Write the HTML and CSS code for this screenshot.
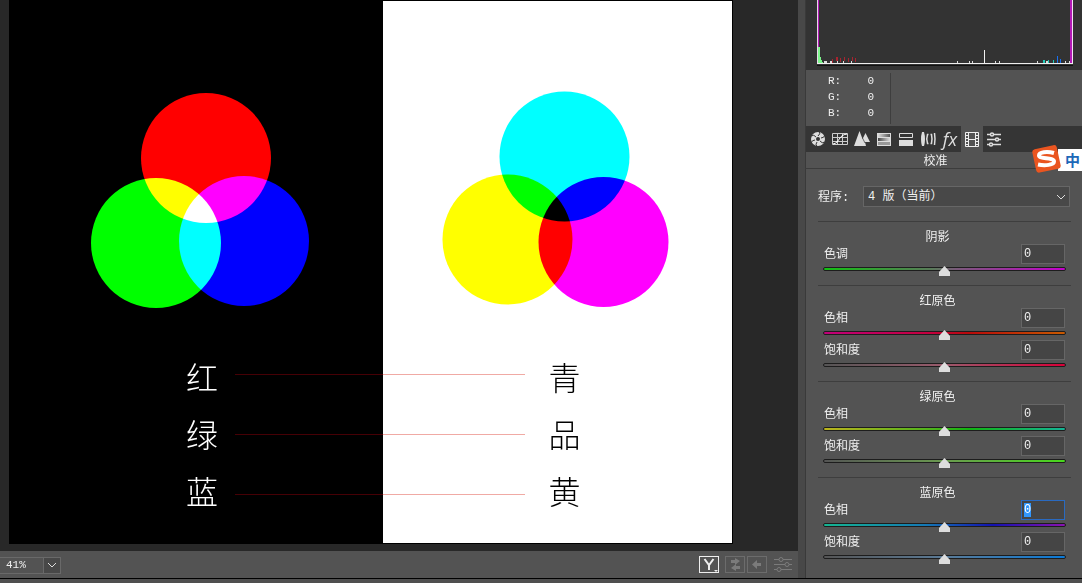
FILE: index.html
```
<!DOCTYPE html>
<html lang="zh-CN">
<head>
<meta charset="utf-8">
<title>Camera Raw</title>
<link rel="stylesheet" href="styles.css">
</head>
<body>
<div class="app">
  <main class="viewer">
    <div class="stage">
      <div class="document">
        <section class="half dark">
          <svg class="circles" viewBox="0 0 374 348" role="img" aria-label="RGB">
            <g class="screen">
              <circle cx="197" cy="158" r="65" fill="#f00"/>
              <circle cx="147" cy="243" r="65" fill="#0f0"/>
              <circle cx="235" cy="241" r="65" fill="#00f"/>
            </g>
          </svg>
          <ul class="words"><li>红</li><li>绿</li><li>蓝</li></ul>
        </section>
        <section class="half light">
          <svg class="circles" viewBox="0 0 349 348" role="img" aria-label="CMY">
            <g class="multiply">
              <circle cx="181.500" cy="156.500" r="65" fill="#0ff"/>
              <circle cx="124.500" cy="239.500" r="65" fill="#ff0"/>
              <circle cx="220.500" cy="242" r="65" fill="#f0f"/>
            </g>
          </svg>
          <ul class="words"><li>青</li><li>品</li><li>黄</li></ul>
        </section>
        <div class="links"><i></i><i></i><i></i></div>
      </div>
    </div>
    <footer class="status">
      <div class="zoom">
        <input class="zoom-value" type="text" value="41%" aria-label="缩放">
        <button class="zoom-menu" aria-label="缩放级别"><svg width="10" height="6" viewBox="0 0 10 6"><path d="M1 1l4 4 4-4"/></svg></button>
      </div>
      <div class="views">
        <button class="view on" aria-label="对比视图"><svg width="20" height="17" viewBox="0 0 20 17"><path d="M5.500 3l4.500 6 4.500-6M10 8.500V14" fill="none" stroke="#eee" stroke-width="2"/><path d="M15 14h4l-2 2z" fill="#eee"/></svg></button>
        <button class="view" aria-label="交换"><svg width="20" height="17" viewBox="0 0 20 17"><path d="M6 4h4V2l5 3-5 4V7H6zM15 10h-4V8l-5 4 5 3v-2h4z" fill="#7b7b7b"/></svg></button>
        <button class="view" aria-label="复制"><svg width="20" height="17" viewBox="0 0 20 17"><path d="M5 8.500l5-4.500v3h4v3h-4v3z" fill="#7b7b7b"/></svg></button>
        <button class="view plain" aria-label="设置"><svg width="18" height="16" viewBox="0 0 18 16"><path d="M0 2.500h5M9 2.500h9M0 7.500h11M15 7.500h3M0 12.500h3M7 12.500h11" stroke="#7b7b7b"/><g fill="none" stroke="#7b7b7b"><circle cx="7" cy="2.500" r="2"/><circle cx="13" cy="7.500" r="2"/><circle cx="5" cy="12.500" r="2"/></g></svg></button>
      </div>
    </footer>
  </main>

  <aside class="panel">
    <div class="histogram">
      <svg width="256" height="66" viewBox="0 0 256 66" role="img" aria-label="直方图" shape-rendering="crispEdges">
        <path d="M1 0h1v63h-1zM253 0h2v63h-2z" fill="#b319b6"/>
        <path d="M0 0h1v63h-1z" fill="#e9d9ea"/><path d="M255 0h1v63h-1z" fill="#f3e3f5"/>
        <path d="M1 47h2v9l3 7H1z" fill="#7ef58d"/>
        <path d="M15 61h1M19 59h2M23 60h1M27 59h1M31 60h1M35 59h1M38 60h1" stroke="#a8242f" stroke-width="4"/>
        <path d="M7 62h3M13 62h2M20 62h1M26 62h1M34 62h1M140 62h1M152 62h1M155 62h1M178 62h1M182 62h1M220 62h1M229 62h2M243 62h1M248 62h1M252 62h1" stroke="#ddd" stroke-width="2"/>
        <path d="M226 61h2M231 61h1M236 61h1" stroke="#22cdbc" stroke-width="3"/>
        <path d="M240 56h1v7h-1zM243 59h1v4h-1z" fill="#1971f2"/>
        <path d="M167 50h1v13h-1z" fill="#f2f2f2"/>
        <path d="M0 63h256v1H0z" fill="#eee"/><path d="M0 65h256v1H0z" fill="#111"/>
      </svg>
    </div>
    <dl class="readout">
      <div><dt>R:</dt><dd>0</dd></div>
      <div><dt>G:</dt><dd>0</dd></div>
      <div><dt>B:</dt><dd>0</dd></div>
    </dl>
    <nav class="tabs">
      <button class="tab" aria-label="基本"><svg width="18" height="18" viewBox="0 0 18 18"><circle cx="9" cy="9" r="7" fill="#ddd"/><path d="M9 6Q12 4 10 1M12 8Q15 8 16 5M11 11Q13 14 16 12M8 12Q6 14 8 17M6 10Q3 10 2 13M7 7Q5 4 2 6" fill="none" stroke="#353535"/><circle cx="9" cy="9" r="2" fill="#353535"/></svg></button>
      <button class="tab" aria-label="色调曲线"><svg width="18" height="18" viewBox="0 0 18 18"><path d="M1.500 3.500h15v11h-15zM1 7.500h16M1 11.500h16M6.500 3v12M11.500 3v12" fill="none" stroke="#ccc"/><path d="M2 14C9 13 7 5 16 4" fill="none" stroke="#fff"/></svg></button>
      <button class="tab" aria-label="细节"><svg width="18" height="18" viewBox="0 0 18 18"><path d="M1 16L6.500 1l3 8L12.500 3l4.500 9h-5l1 4z" fill="#ddd"/><path d="M9.500 8l2.500 5" stroke="#353535" stroke-width=".7"/></svg></button>
      <button class="tab" aria-label="HSL"><svg width="18" height="18" viewBox="0 0 18 18"><defs><linearGradient id="h"><stop stop-color="#444"/><stop offset="1" stop-color="#ddd"/></linearGradient><linearGradient id="k"><stop stop-color="#ddd"/><stop offset="1" stop-color="#555"/></linearGradient></defs><path d="M2 3h14v13H2z" fill="#ddd"/><path d="M3 4h12v3H3z" fill="url(#k)"/><path d="M3 8h12v3H3z" fill="url(#h)"/><path d="M3 12h12v3H3z" fill="#999"/></svg></button>
      <button class="tab" aria-label="分离色调"><svg width="18" height="18" viewBox="0 0 18 18"><path d="M2.500 3.500h13v4h-13z" fill="none" stroke="#ddd"/><path d="M2 10h14v6H2z" fill="#ddd"/></svg></button>
      <button class="tab" aria-label="镜头校正"><svg width="18" height="18" viewBox="0 0 18 18"><path d="M3 2h2q2 7 0 14H3Q1 9 3 2z" fill="#ddd"/><path d="M9.500 4.500h-1q-1.500 4.500 0 9h1M11.500 4.500h1q1 4.500 0 9h-1M15.500 3q1 6 0 12" fill="none" stroke="#ddd" stroke-width="1.500"/></svg></button>
      <button class="tab fx" aria-label="效果">fx</button>
      <button class="tab on" aria-label="校准"><svg width="18" height="18" viewBox="0 0 18 18"><path d="M2.500 2.500h13v14h-13zM5.500 2v15M12.500 2v15M5 9.500h8" fill="none" stroke="#eee"/><path d="M3 5.500h2M3 8.500h2M3 11.500h2M3 14.500h2M13 5.500h2M13 8.500h2M13 11.500h2M13 14.500h2" stroke="#eee"/></svg></button>
      <button class="tab" aria-label="预设"><svg width="18" height="18" viewBox="0 0 18 18"><path d="M2 4.500h14M2 9.500h14M2 14.500h14" stroke="#ddd" stroke-width="1.500"/><g fill="#353535" stroke="#ddd" stroke-width="1.500"><circle cx="7" cy="4.500" r="1.500"/><circle cx="12" cy="9.500" r="1.500"/><circle cx="6" cy="14.500" r="1.500"/></g></svg></button>
    </nav>
    <h1 class="title">校准</h1>
    <div class="ime">
      <svg width="30" height="28" viewBox="0 0 30 28"><rect x="2" y="2" width="25" height="24" rx="3" fill="#ea5520" transform="rotate(-12 14 14)"/><path d="M22 8C15 6 7 7 7 10.500c0 4 15 1.500 15 6 0 3.500-9 4.500-16 3" fill="none" stroke="#fff" stroke-width="4"/></svg>
      <span>中</span>
    </div>
    <div class="process">
      <label for="process">程序:</label>
      <div class="picker">
        <select id="process"><option>4 版（当前）</option></select>
        <svg width="10" height="6" viewBox="0 0 10 6"><path d="M1 1l4 4 4-4"/></svg>
      </div>
    </div>
    <div class="groups">
      <fieldset class="group">
        <legend>阴影</legend>
        <div class="control"><label for="a1">色调</label><input class="num" id="a1" type="text" value="0"><input class="slider tint" type="range" min="-100" max="100" value="0" aria-label="色调"></div>
      </fieldset>
      <fieldset class="group">
        <legend>红原色</legend>
        <div class="control"><label for="b1">色相</label><input class="num" id="b1" type="text" value="0"><input class="slider red-hue" type="range" min="-100" max="100" value="0" aria-label="红色色相"></div>
        <div class="control"><label for="b2">饱和度</label><input class="num" id="b2" type="text" value="0"><input class="slider red-sat" type="range" min="-100" max="100" value="0" aria-label="红色饱和度"></div>
      </fieldset>
      <fieldset class="group">
        <legend>绿原色</legend>
        <div class="control"><label for="c1">色相</label><input class="num" id="c1" type="text" value="0"><input class="slider green-hue" type="range" min="-100" max="100" value="0" aria-label="绿色色相"></div>
        <div class="control"><label for="c2">饱和度</label><input class="num" id="c2" type="text" value="0"><input class="slider green-sat" type="range" min="-100" max="100" value="0" aria-label="绿色饱和度"></div>
      </fieldset>
      <fieldset class="group">
        <legend>蓝原色</legend>
        <div class="control"><label for="d1">色相</label><input class="num active" id="d1" type="text" value="0"><input class="slider blue-hue" type="range" min="-100" max="100" value="0" aria-label="蓝色色相"></div>
        <div class="control"><label for="d2">饱和度</label><input class="num" id="d2" type="text" value="0"><input class="slider blue-sat" type="range" min="-100" max="100" value="0" aria-label="蓝色饱和度"></div>
      </fieldset>
    </div>
  </aside>
</div>
<script src="main.js"></script>
</body>
</html>
```
FILE: main.js
```
document.getElementById("d1").select();
```
FILE: styles.css
```
* { box-sizing: border-box; }
body {
  margin: 0;
  background: #4f4f4f;
  color: #f0f0f0;
  font: 12px/16px "Liberation Mono", "Noto Sans CJK SC", monospace;
}
button, input, select { font: inherit; color: inherit; margin: 0; }
button { padding: 0; border: 0; background: none; display: grid; place-items: center; }
svg { display: block; }

.app {
  display: flex;
  height: calc(100vh - 4px);
  border-bottom: 1px solid #000;
  overflow: hidden;
}
.viewer { flex: 1; min-width: 0; display: flex; flex-direction: column; }
.stage { flex: 1; min-height: 0; padding: 0 65px 7px 9px; background: #282828; }
.document {
  position: relative;
  display: grid;
  grid-template-columns: 374fr 349fr;
  height: 100%;
  border: 1px solid #000;
  border-width: 1px 1px 1px 0;
  background: #000;
}
.half { display: flex; flex-direction: column; min-width: 0; }
.dark { background: #000; color: #fff; }
.light { background: #fff; color: #000; }
.circles { width: 100%; height: auto; margin-top: -1px; }
.screen, .multiply { isolation: isolate; }
.screen circle { mix-blend-mode: screen; }
.multiply circle { mix-blend-mode: multiply; }
.words {
  list-style: none;
  margin: 0;
  padding: 0 0 0 12px;
  text-align: center;
  font: 300 32px/57px "Noto Sans CJK SC", sans-serif;
}
.light .words { padding-left: 14px; }
.links {
  position: absolute;
  left: 226px;
  right: 207px;
  top: 373px;
  display: flex;
  flex-direction: column;
  gap: 59px;
}
.links i { height: 1px; background: linear-gradient(90deg, #460005 51%, #f0aaa4 51%); }

.status {
  display: flex;
  justify-content: space-between;
  align-items: center;
  height: 27px;
  padding-right: 5px;
  background: #535353;
}
.zoom { display: flex; height: 17px; margin-top: 1px; border: 1px solid #696969; border-left: 0; }
.zoom-value {
  width: 43px;
  padding: 0 0 0 6px;
  border: 0;
  background: transparent;
  font-size: 11px;
}
.zoom-menu { width: 17px; border-left: 1px solid #696969; background: #484848; }
.zoom-menu path, .picker path { fill: none; stroke: #ddd; }
.views { display: flex; align-items: center; gap: 2px; }
.view { width: 20px; height: 17px; outline: 1px solid #6c6c6c; outline-offset: -1px; }
.view.on { outline-color: #eee; margin-right: 4px; }
.view.plain { outline: 0; margin-left: 4px; }

.panel {
  position: relative;
  flex: 0 0 284px;
  display: flex;
  flex-direction: column;
  border-left: 7px solid #484848;
  box-shadow: inset 1px 0 #3a3a3a;
  background: #535353;
}
.histogram { height: 70px; margin-left: 1px; padding: 0 9px 0 11px; background: #333; }
.readout {
  display: flex;
  flex-direction: column;
  width: 86px;
  height: 51px;
  margin: 3px 0 2px 0;
  padding: 0 16px 0 23px;
  border-right: 1px solid #3e3e3e;
  font-size: 11px;
  line-height: 16px;
}
.readout div { display: flex; justify-content: space-between; }
.readout dd { margin: 0; }
.tabs { display: flex; height: 26px; margin-left: 1px; padding-left: 1px; background: #353535; }
.tab { width: 22px; height: 26px; }
.tab.on { background: #535353; }
.tab.fx { font: italic 18px/22px "Open Sans", sans-serif; color: #ddd; }
.title {
  height: 17px;
  margin: 0;
  padding-right: 16px;
  border-bottom: 1px solid #3c3c3c;
  text-align: center;
  font-size: 12px;
  line-height: 20px;
  font-weight: 400;
}
.ime {
  position: absolute;
  right: 0;
  top: 145px;
  display: flex;
  align-items: center;
  color: #1d68b8;
  font: 700 15px/22px "Noto Sans CJK SC", sans-serif;
}
.ime svg { position: relative; }
.ime span { width: 24px; margin-left: -4px; padding-left: 7px; margin-top: 2px; background: #fff; }
.process { display: flex; align-items: center; justify-content: space-between; padding: 17px 12px 14px 13px; }
.picker { position: relative; }
.picker svg { position: absolute; right: 4px; top: 8px; pointer-events: none; }
.process label { padding-top: 2px; }
.process select {
  display: block;
  width: 207px;
  height: 21px;
  padding: 1px 4px 0;
  appearance: none;
  border: 1px solid #666;
  border-radius: 0;
  background: #484848;
}
.groups { padding: 0 11px 0 13px; }
.group { min-width: 0; margin: 0; border: 0; border-top: 1px solid #3e3e3e; padding: 10px 5px 9px; }
.group legend { float: left; width: 100%; padding: 0 14px 0 0; text-align: center; line-height: 12px; }
.control {
  clear: both;
  display: grid;
  grid-template-columns: 1fr 44px 1px;
  grid-template-rows: 20px 12px;
}
.control label { padding-left: 1px; line-height: 22px; }
.num { width: 44px; height: 20px; padding: 0 2px; border: 1px solid #666; background: #454545; outline: 0; }
.num.active { border-color: #2a6ac0; }
.num::selection { background: #3297fd; color: #fff; }
.slider { grid-column: 1 / 4; align-self: start; appearance: none; width: 100%; height: 10px; margin: 0; background: none; }
.slider::-webkit-slider-runnable-track { height: 4px; border: 1px solid #1d1d1d; border-radius: 2px; background: var(--track); }
.slider::-webkit-slider-thumb {
  appearance: none;
  width: 11px;
  height: 10px;
  margin-top: -2px;
  background: #ddd;
  clip-path: polygon(50% 0, 100% 60%, 100% 100%, 0 100%, 0 60%);
}
.tint { --track: linear-gradient(90deg, #12c112, #5a7a5a 45%, #7a5a7a 55%, #c500cc); }
.red-hue { --track: linear-gradient(90deg, #c0007a, #c4003c 45%, #b80a0a 60%, #c85a00); }
.red-sat { --track: linear-gradient(90deg, #555, #9a5a6c 50%, #d80038); }
.green-hue { --track: linear-gradient(90deg, #bcb41c, #4db41c 45%, #12b412 60%, #14b496); }
.green-sat { --track: linear-gradient(90deg, #555, #6a9a50 50%, #48d81c); }
.blue-hue { --track: linear-gradient(90deg, #14b490, #1478b4 42%, #1212b0 70%, #8a12b0); }
.blue-sat { --track: linear-gradient(90deg, #555, #5a7a96 50%, #0a7ad8); }
```
